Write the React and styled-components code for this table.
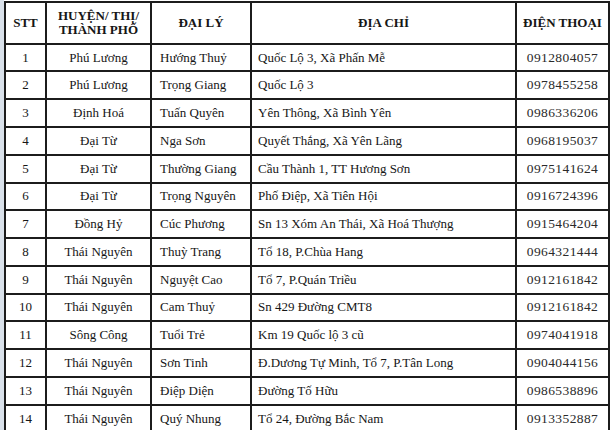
import React from 'react';
import styled, { createGlobalStyle } from 'styled-components';

const rows = [
  ['1', 'Phú Lương', 'Hướng Thuỷ', 'Quốc Lộ 3, Xã Phấn Mễ', '0912804057'],
  ['2', 'Phú Lương', 'Trọng Giang', 'Quốc Lộ 3', '0978455258'],
  ['3', 'Định Hoá', 'Tuấn Quyên', 'Yên Thông, Xã Bình Yên', '0986336206'],
  ['4', 'Đại Từ', 'Nga Sơn', 'Quyết Thắng, Xã Yên Lãng', '0968195037'],
  ['5', 'Đại Từ', 'Thường Giang', 'Cầu Thành 1, TT Hương Sơn', '0975141624'],
  ['6', 'Đại Từ', 'Trọng Nguyên', 'Phố Điệp, Xã Tiên Hội', '0916724396'],
  ['7', 'Đồng Hỷ', 'Cúc Phương', 'Sn 13 Xóm An Thái, Xã Hoá Thượng', '0915464204'],
  ['8', 'Thái Nguyên', 'Thuỳ Trang', 'Tổ 18, P.Chùa Hang', '0964321444'],
  ['9', 'Thái Nguyên', 'Nguyệt Cao', 'Tổ 7, P.Quán Triều', '0912161842'],
  ['10', 'Thái Nguyên', 'Cam Thuỷ', 'Sn 429 Đường CMT8', '0912161842'],
  ['11', 'Sông Công', 'Tuổi Trẻ', 'Km 19 Quốc lộ 3 cũ', '0974041918'],
  ['12', 'Thái Nguyên', 'Sơn Tinh', 'Đ.Dương Tự Minh, Tổ 7, P.Tân Long', '0904044156'],
  ['13', 'Thái Nguyên', 'Điệp Diện', 'Đường Tố Hữu', '0986538896'],
  ['14', 'Thái Nguyên', 'Quý Nhung', 'Tổ 24, Đường Bắc Nam', '0913352887']
];

const App = () => {
  return (
    <Page>
      <GlobalStyle />
      <Strip />
      <Table>
        <colgroup>
          <col style={{ width: 41 }} />
          <col style={{ width: 105 }} />
          <col style={{ width: 100 }} />
          <col style={{ width: 265 }} />
          <col style={{ width: 93 }} />
        </colgroup>
        <thead>
          <HeadRow>
            <Th>STT</Th>
            <Th>HUYỆN/ THỊ/<br />THÀNH PHỐ</Th>
            <Th>ĐẠI LÝ</Th>
            <Th>ĐỊA CHỈ</Th>
            <Th>ĐIỆN THOẠI</Th>
          </HeadRow>
        </thead>
        <tbody>
          {rows.map(([stt, district, agent, address, phone]) => (
            <Row key={stt}>
              <Td $align="center">{stt}</Td>
              <Td $align="center">{district}</Td>
              <Td $pad="8px">{agent}</Td>
              <Td $pad="6px">{address}</Td>
              <Phone>{phone}</Phone>
            </Row>
          ))}
        </tbody>
      </Table>
    </Page>
  );
};

const GlobalStyle = createGlobalStyle`
  html, body {
    margin: 0;
    padding: 0;
    background: #fff;
    overflow: hidden;
  }
`;

const Page = styled.div`
  display: flex;
  align-items: flex-start;
  height: 430px;
  overflow: hidden;
  font-family: "Liberation Serif", "Times New Roman", serif;
  color: #161616;
`;

const Strip = styled.div`
  width: 4px;
  height: 430px;
  flex: none;
  background: #d9e1ea;
`;

const Table = styled.table`
  margin-top: 1px;
  width: 606px;
  flex: none;
  table-layout: fixed;
  border-collapse: collapse;
  font-size: 13px;
`;

const HeadRow = styled.tr`
  height: 41.7px;
`;

const Row = styled.tr`
  height: 27.77px;
`;

const Th = styled.th`
  border: 2px solid #1c1c1c;
  padding: 0 2px;
  font-weight: bold;
  font-size: 13px;
  line-height: 14px;
  text-align: center;
  vertical-align: middle;
`;

const Td = styled.td`
  border: 2px solid #1c1c1c;
  padding: 0 ${(p) => p.$pad || '2px'};
  text-align: ${(p) => p.$align || 'left'};
  vertical-align: middle;
  white-space: nowrap;
  line-height: 16px;
`;

const Phone = styled(Td)`
  text-align: center;
  font-size: 13.5px;
  letter-spacing: 0.4px;
  color: #2a2a2a;
`;

export default App;
